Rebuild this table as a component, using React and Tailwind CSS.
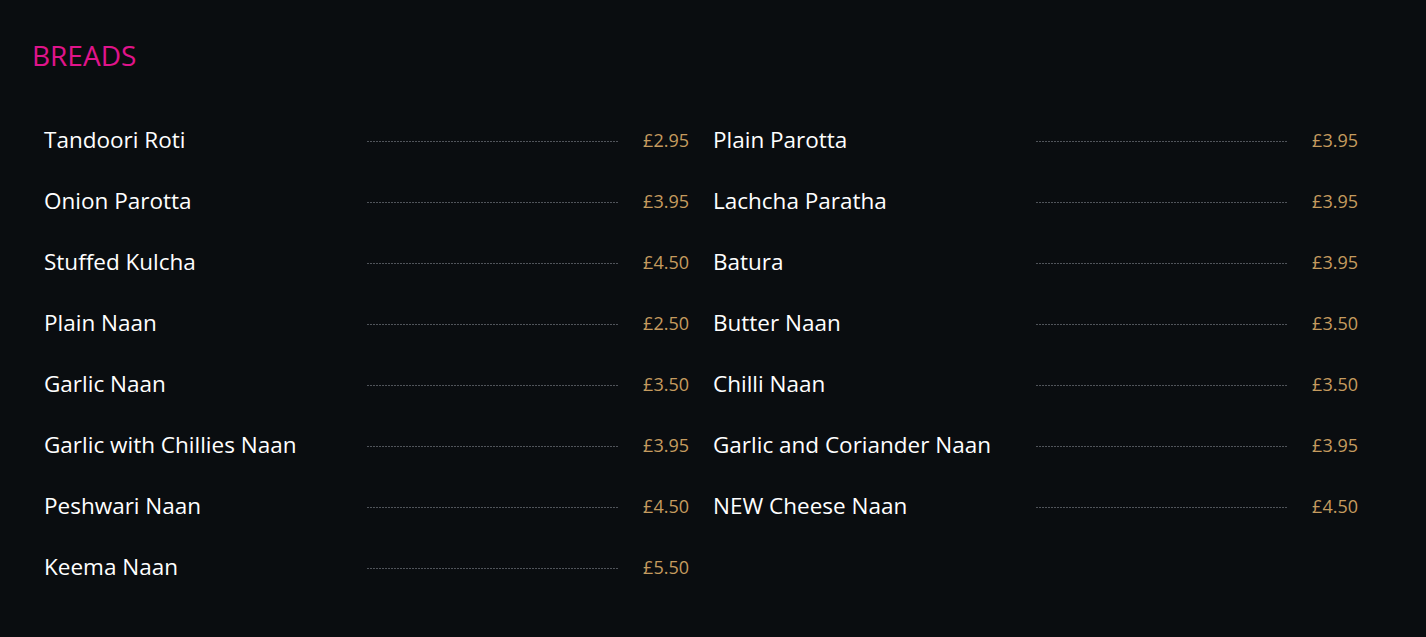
import React from "react";

const left = [
  ["Tandoori Roti", "£2.95"],
  ["Onion Parotta", "£3.95"],
  ["Stuffed Kulcha", "£4.50"],
  ["Plain Naan", "£2.50"],
  ["Garlic Naan", "£3.50"],
  ["Garlic with Chillies Naan", "£3.95"],
  ["Peshwari Naan", "£4.50"],
  ["Keema Naan", "£5.50"],
];
const right = [
  ["Plain Parotta", "£3.95"],
  ["Lachcha Paratha", "£3.95"],
  ["Batura", "£3.95"],
  ["Butter Naan", "£3.50"],
  ["Chilli Naan", "£3.50"],
  ["Garlic and Coriander Naan", "£3.95"],
  ["NEW Cheese Naan", "£4.50"],
];

function Row({ name, price }) {
  return (
    <div className="flex h-[61px] items-center px-[12px]">
      <div className="w-1/2 pb-[2px] text-[22.5px] leading-[28px] text-white">{name}</div>
      <div className="flex-1 h-px mt-[2px] bg-[repeating-linear-gradient(to_right,#50545a_0_2px,transparent_2px_3px)]" />
      <div className="w-[71px] pb-[2px] text-right text-[18px] leading-[24px] text-[#c59b5f]">{price}</div>
    </div>
  );
}

export default function App() {
  return (
    <div
      className="min-h-screen w-full bg-[#0a0d10] px-[32px] pt-[37px]"
      style={{ fontFamily: "'Open Sans', Lato, sans-serif" }}
    >
      <h2 className="text-[28px] leading-[36px] text-[#e0148b]">BREADS</h2>
      <div className="mt-[37px] grid w-[1338px] grid-cols-2">
        <div className="flex flex-col">
          {left.map(([n, p]) => (
            <Row key={n} name={n} price={p} />
          ))}
        </div>
        <div className="flex flex-col">
          {right.map(([n, p]) => (
            <Row key={n} name={n} price={p} />
          ))}
        </div>
      </div>
    </div>
  );
}
